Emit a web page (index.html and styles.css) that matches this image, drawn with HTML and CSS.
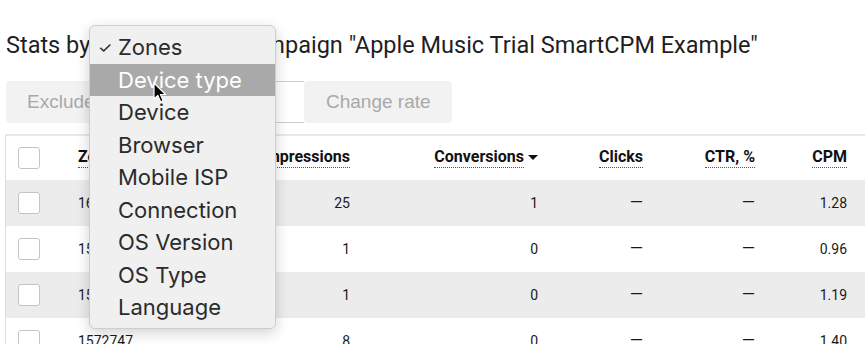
FILE: index.html
```html
<!DOCTYPE html>
<html>
<head>
<meta charset="utf-8">
<link rel="stylesheet" href="styles.css">
</head>
<body>
<div class="page">
  <h1 class="title">Stats by <span class="select">Zones</span> for campaign "Apple Music Trial SmartCPM Example"</h1>
  <div class="toolbar">
    <button class="btn btn-exclude">Exclude selected</button>
    <input class="rate-input" type="text">
    <button class="btn btn-rate">Change rate</button>
  </div>
  <div class="card">
    <table class="stats">
      <colgroup>
        <col class="c-cb"><col class="c-zone"><col class="c-imp"><col class="c-conv"><col class="c-clicks"><col class="c-ctr"><col class="c-cpm"><col class="c-rest">
      </colgroup>
      <thead>
        <tr>
          <th><span class="checkbox"></span></th>
          <th class="left"><span class="sort">Zone</span></th>
          <th><span class="sort">Impressions</span></th>
          <th><span class="sort">Conversions</span><span class="caret"></span></th>
          <th><span class="sort">Clicks</span></th>
          <th><span class="sort">CTR, %</span></th>
          <th><span class="sort">CPM</span></th>
          <th></th>
        </tr>
      </thead>
      <tbody>
        <tr class="odd">
          <td><span class="checkbox"></span></td><td class="left">1649210</td><td>25</td><td>1</td><td><span class="dash">—</span></td><td><span class="dash">—</span></td><td>1.28</td><td></td>
        </tr>
        <tr>
          <td><span class="checkbox"></span></td><td class="left">1573882</td><td>1</td><td>0</td><td><span class="dash">—</span></td><td><span class="dash">—</span></td><td>0.96</td><td></td>
        </tr>
        <tr class="odd">
          <td><span class="checkbox"></span></td><td class="left">1572931</td><td>1</td><td>0</td><td><span class="dash">—</span></td><td><span class="dash">—</span></td><td>1.19</td><td></td>
        </tr>
        <tr>
          <td><span class="checkbox"></span></td><td class="left">1572747</td><td>8</td><td>0</td><td><span class="dash">—</span></td><td><span class="dash">—</span></td><td>1.40</td><td></td>
        </tr>
      </tbody>
    </table>
  </div>

  <div class="menu">
    <div class="menu-item"><span class="check">✓</span>Zones</div>
    <div class="menu-item active">Device type</div>
    <div class="menu-item">Device</div>
    <div class="menu-item">Browser</div>
    <div class="menu-item">Mobile ISP</div>
    <div class="menu-item">Connection</div>
    <div class="menu-item">OS Version</div>
    <div class="menu-item">OS Type</div>
    <div class="menu-item">Language</div>
  </div>

  <svg class="cursor" width="15" height="22" viewBox="0 0 15 22">
    <path d="M1 1 L1 17 L4.8 13.4 L7.6 19.8 L10.2 18.7 L7.4 12.5 L12.6 12.5 Z" fill="#000" stroke="#fff" stroke-width="1.2" stroke-linejoin="round"/>
  </svg>
</div>
</body>
</html>
```

FILE: styles.css
```css
* { box-sizing: border-box; }
html, body { margin: 0; padding: 0; background: #fff; overflow: hidden; }
body { font-family: Roboto, "Liberation Sans", sans-serif; color: #222; width: 865px; height: 344px; }
.page { position: relative; width: 865px; height: 344px; }

.title {
  margin: 0;
  padding: 31px 0 0 6px;
  font-size: 23.5px;
  font-weight: 400;
  line-height: 28px;
  white-space: nowrap;
  color: #1f1f1f;
}
.select { display: inline-block; width: 102px; }

.toolbar {
  display: flex;
  align-items: stretch;
  margin: 22px 0 0 6px;
  height: 42px;
}
.btn {
  border: none;
  background: #f2f2f2;
  border-radius: 4px;
  font-family: "Liberation Sans", Arial, sans-serif;
  font-size: 19px;
  color: #a9a9a9;
  text-align: left;
  padding: 0 21px;
}
.btn-exclude { width: 200px; }
.rate-input {
  width: 98px;
  border: 1px solid #cfcfcf;
  border-right: none;
  background: #fff;
  margin: 0;
}
.btn-rate { width: 148px; padding-left: 22px; }

.card {
  margin: 11px 0 0 5px;
  border-left: 1px solid #dcdcdc;
  border-top: 2px solid #e8e8e8;
}
.stats {
  border-collapse: collapse;
  table-layout: fixed;
  width: 900px;
  font-size: 14px;
  color: #1a1a1a;
}
.c-cb { width: 59px; }
.c-zone { width: 159px; }
.c-imp { width: 140px; }
.c-conv { width: 188px; }
.c-clicks { width: 105px; }
.c-ctr { width: 112px; }
.c-cpm { width: 92px; }
.c-rest { width: 45px; }

.stats th, .stats td {
  text-align: right;
  padding: 0 14px 0 0;
  white-space: nowrap;
}
.stats th:first-child, .stats td:first-child { text-align: left; padding: 0 0 0 12px; }
.stats th.left, .stats td.left { text-align: left; padding-left: 13px; }
.stats thead tr { height: 44px; }
.stats thead th { padding-bottom: 3px; }
.stats thead th:first-child { padding-bottom: 0; }
.stats tbody tr { height: 46px; }
.stats tr.odd { background: #ececec; }
.stats th { font-weight: 700; font-size: 16px; color: #111; }
.sort { border-bottom: 1px dotted #555; padding-bottom: 1px; }
.caret {
  display: inline-block;
  width: 0; height: 0;
  margin-left: 4px;
  vertical-align: middle;
  border-left: 5px solid transparent;
  border-right: 5px solid transparent;
  border-top: 5px solid #111;
}
.dash { font-size: 17px; line-height: 14px; }
.checkbox {
  display: inline-block;
  width: 22px; height: 22px;
  border: 1px solid #c4c4c4;
  border-radius: 3px;
  background: #fff;
  vertical-align: middle;
}

.menu {
  position: absolute;
  left: 89px; top: 25px;
  width: 187px; height: 304px;
  background: #f0f0f0;
  border: 1px solid #cdcdcd;
  border-radius: 6px;
  box-shadow: 0 4px 14px rgba(0,0,0,0.18);
  padding-top: 5px;
  font-family: Inter, "Liberation Sans", sans-serif;
}
.menu-item {
  position: relative;
  height: 32.5px;
  line-height: 32.5px;
  padding-left: 28px;
  font-size: 22px;
  color: #2b2b2b;
}
.menu-item.active { background: #a9a9a9; color: #fff; }
.check { position: absolute; left: 8px; font-size: 16px; }

.cursor { position: absolute; left: 153px; top: 82px; }
```
